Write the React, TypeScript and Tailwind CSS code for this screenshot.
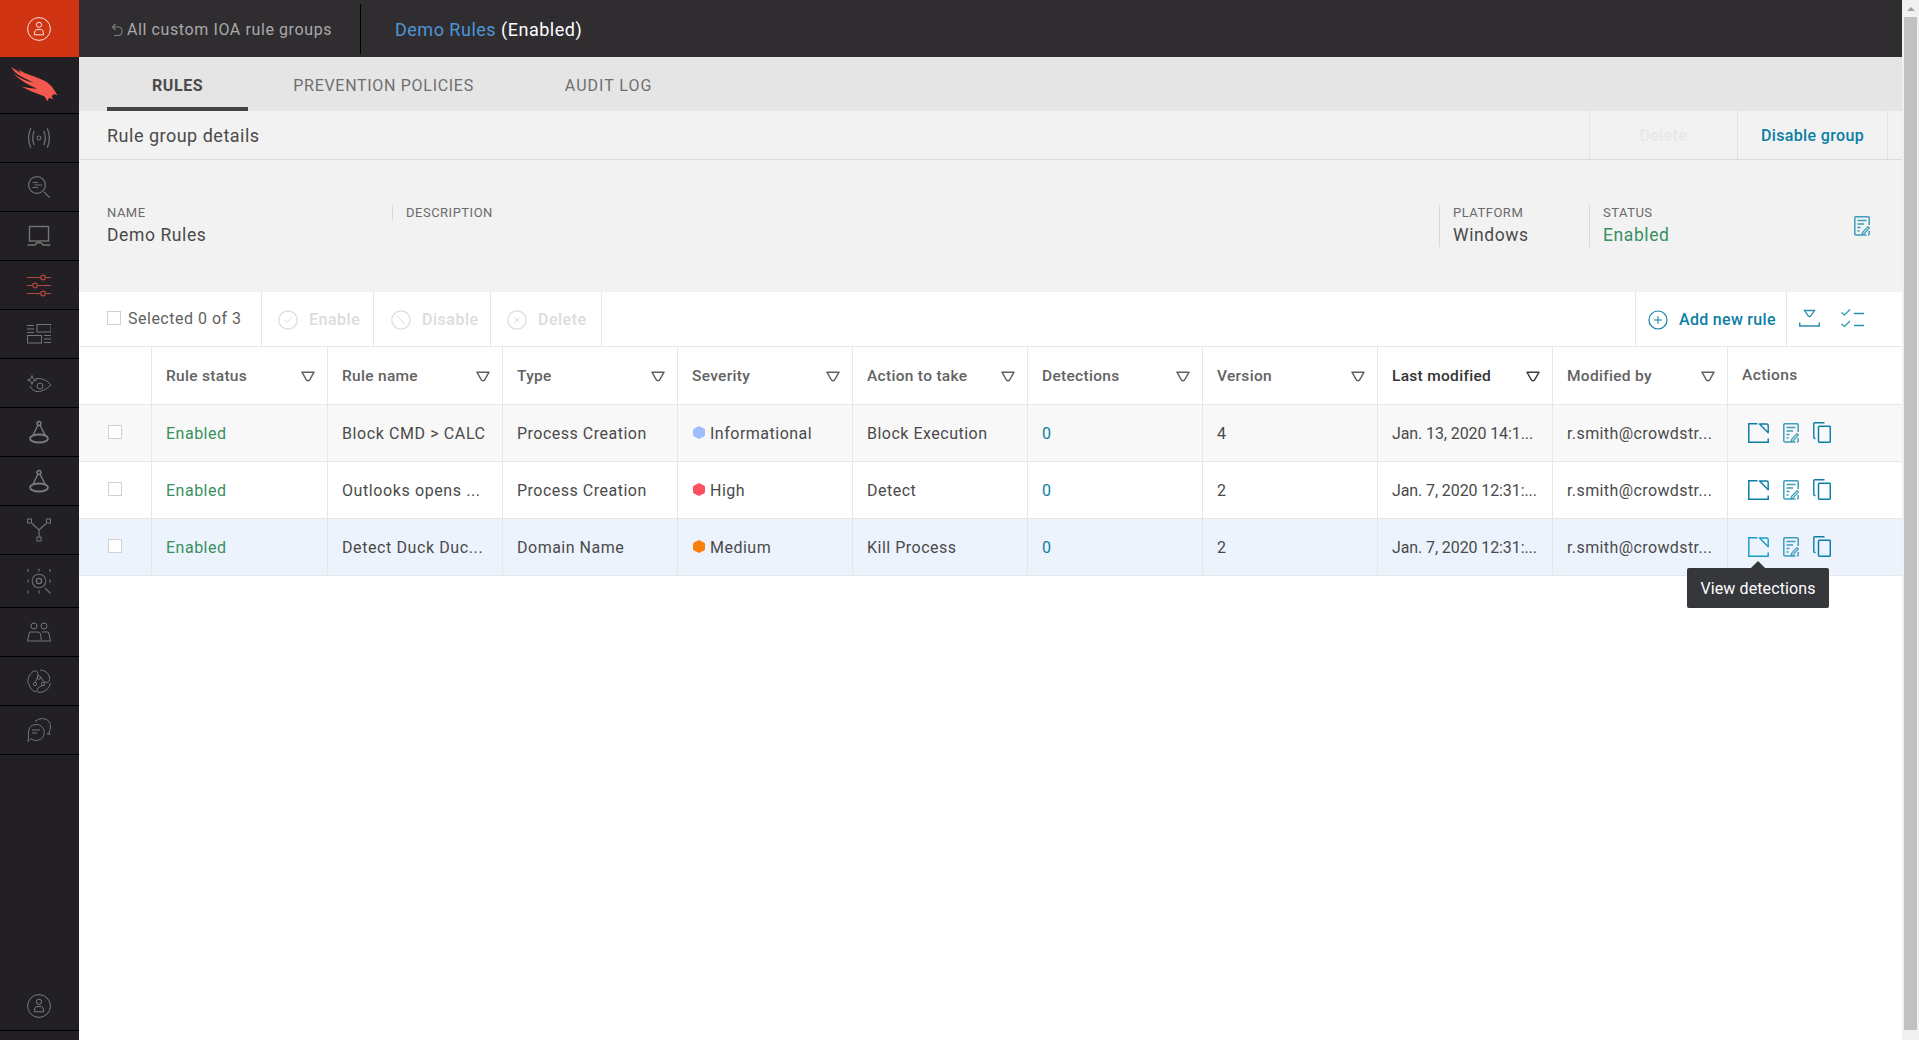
import React from 'react';

const FONT = 'font-["Roboto",sans-serif]';

const Ico = ({ className, vb = '0 0 24 24', children }: { className: string; vb?: string; children: React.ReactNode }) => (
  <svg viewBox={vb} fill="none" stroke="currentColor" strokeWidth={1} className={className}>
    {children}
  </svg>
);

const UserCircle = ({ className, sw = 1 }: { className: string; sw?: number }) => (
  <svg viewBox="0 0 24 24" fill="none" stroke="currentColor" strokeWidth={sw} className={className}>
    <circle cx="12" cy="12" r="11.4" />
    <circle cx="12" cy="7.8" r="2.6" />
    <path d="M7.2 17.8 L8.2 13.6 Q8.5 12.6 9.6 12.6 H14.4 Q15.5 12.6 15.8 13.6 L16.8 17.8 Z" />
  </svg>
);

const navIcons: { h: string; icon: React.ReactNode }[] = [
  {
    h: 'h-[49px]',
    icon: (
      <Ico className="w-[26px] h-[26px] text-[#6f6f6f]">
        <circle cx="12" cy="12" r="1.8" />
        <path d="M7.6 5.6 Q4.8 12 7.6 18.4 M16.4 5.6 Q19.2 12 16.4 18.4 M4.4 3 Q0.4 12 4.4 21 M19.6 3 Q23.6 12 19.6 21" strokeWidth={1.2} />
      </Ico>
    ),
  },
  {
    h: 'h-[49px]',
    icon: (
      <Ico className="w-[24px] h-[24px] text-[#6f6f6f]">
        <circle cx="10" cy="10" r="8.4" strokeWidth={1.2} />
        <path d="M5.5 7.5 H11 M7.5 10 H15 M5.5 12.5 H11 M17 17 L22.5 22.5" strokeWidth={1.2} />
      </Ico>
    ),
  },
  {
    h: 'h-[49px]',
    icon: (
      <Ico className="w-[24px] h-[24px] text-[#757575]">
        <rect x="2.5" y="2.5" width="19" height="14.5" strokeWidth={1.4} />
        <path d="M0.5 21 H8 Q9 18.5 12 18.5 Q15 18.5 16 21 H23.5" strokeWidth={1.4} />
      </Ico>
    ),
  },
  {
    h: 'h-[49px]',
    icon: (
      <Ico className="w-[24px] h-[24px] text-[#b5473c]">
        <path d="M0 4.5 H13 M19 4.5 H24 M0 12.5 H5 M11 12.5 H24 M0 20.5 H13 M19 20.5 H24" strokeWidth={1.2} />
        <circle cx="16" cy="4.5" r="2.3" strokeWidth={1.2} />
        <circle cx="8" cy="12.5" r="2.3" strokeWidth={1.2} />
        <circle cx="16" cy="20.5" r="2.3" strokeWidth={1.2} />
      </Ico>
    ),
  },
  {
    h: 'h-[49px]',
    icon: (
      <Ico className="w-[24px] h-[20px] text-[#757575]" vb="0 0 24 20">
        <path d="M0 1.5 H7 M0 5 H7 M0 8.5 H7 M17 11.5 H24 M17 15 H24 M17 18.5 H24" strokeWidth={1} />
        <rect x="10" y="0.5" width="14" height="7.5" />
        <rect x="0.5" y="11.5" width="14" height="7.5" />
      </Ico>
    ),
  },
  {
    h: 'h-[49px]',
    icon: (
      <Ico className="w-[24px] h-[17px] text-[#757575]" vb="0 0 24 17">
        <path d="M9 3.5 Q18 2.5 24 10 Q16 17.5 9 16.5 Q5 15.5 3 11" strokeWidth={1} />
        <circle cx="13" cy="11" r="3" strokeWidth={1} />
        <path d="M5 0.5 L6.2 3.8 L9.5 5 L6.2 6.2 L5 9.5 L3.8 6.2 L0.5 5 L3.8 3.8 Z" strokeWidth={1} />
      </Ico>
    ),
  },
  {
    h: 'h-[49px]',
    icon: (
      <Ico className="w-[24px] h-[24px] text-[#7b7b7b]">
        <path d="M12 1.5 A2 2 0 1 1 11.99 1.5" strokeWidth={1.6} />
        <path d="M10.8 5.5 L5.5 16 M13.2 5.5 L18.5 16" strokeWidth={1.4} />
        <ellipse cx="12" cy="18.5" rx="9" ry="4" strokeWidth={1.8} />
      </Ico>
    ),
  },
  {
    h: 'h-[49px]',
    icon: (
      <Ico className="w-[24px] h-[24px] text-[#7b7b7b]">
        <path d="M12 1.5 A2 2 0 1 1 11.99 1.5" strokeWidth={1.6} />
        <path d="M10.8 5.5 L5.5 16 M13.2 5.5 L18.5 16" strokeWidth={1.4} />
        <ellipse cx="12" cy="18.5" rx="9" ry="4" strokeWidth={1.8} />
      </Ico>
    ),
  },
  {
    h: 'h-[49px]',
    icon: (
      <Ico className="w-[24px] h-[24px] text-[#757575]">
        <rect x="0.5" y="1" width="4" height="4" />
        <rect x="19.5" y="1" width="4" height="4" />
        <rect x="10" y="19" width="4" height="4" />
        <path d="M5 5.5 L12 12 L19 5.5 M12 12 V18.5" strokeWidth={1.2} />
      </Ico>
    ),
  },
  {
    h: 'h-[53px]',
    icon: (
      <Ico className="w-[24px] h-[26px] text-[#6f6f6f]" vb="0 0 24 26">
        <circle cx="12" cy="13" r="6.8" strokeWidth={1.1} />
        <circle cx="12" cy="13" r="2.6" strokeWidth={1.4} />
        <path d="M12 0.5 V3.5 M12 22.5 V25.5 M1 1 V4 M23 1 V4 M1 11.5 V14.5 M23 11.5 V14.5 M1 22.5 V25.5 M18 20 L23.5 25.5" strokeWidth={1.2} />
      </Ico>
    ),
  },
  {
    h: 'h-[49px]',
    icon: (
      <Ico className="w-[24px] h-[20px] text-[#757575]" vb="0 0 24 20">
        <circle cx="7" cy="4" r="3" />
        <circle cx="17" cy="4" r="3" />
        <path d="M0.5 19 L2.5 10 H11 Q13 10 13.5 12 L14.5 19 Z M15 10 H21.5 L23.5 19 H15" />
      </Ico>
    ),
  },
  {
    h: 'h-[49px]',
    icon: (
      <Ico className="w-[24px] h-[24px] text-[#757575]">
        <circle cx="12" cy="8.5" r="1.7" />
        <circle cx="8" cy="15" r="1.7" />
        <circle cx="16" cy="15" r="1.7" />
        <path d="M13 1 Q20.5 1.5 22.5 8 Q23.5 13.5 19 13.5 Q16 13 14 8.5 M23.5 14 Q22 22 13 23.5 Q8 23 11 19 Q14 16.5 17.5 16 M1 15 Q0 7 6 2.5 Q10 0.5 11 4.5 Q11.5 9 8 13.5 M2 15 Q3 21 9 23" strokeWidth={1} />
      </Ico>
    ),
  },
  {
    h: 'h-[49px]',
    icon: (
      <Ico className="w-[24px] h-[24px] text-[#757575]">
        <path d="M8 3.5 Q11 0.5 15.5 0.5 Q23.5 1 23.5 9 Q23.5 12 22 14 L23 16.5 L20 15.5" strokeWidth={1} />
        <path d="M9 6.5 A8 8 0 1 1 4 20.5 L1 23.5 L1.5 18 Q0.5 6.5 9 6.5 Z" strokeWidth={1} />
        <path d="M5 12 H13 M5 15 H10" strokeWidth={1.2} />
      </Ico>
    ),
  },
];

const Sort = ({ dark }: { dark?: boolean }) => (
  <svg viewBox="0 0 14 11" fill="none" stroke="currentColor" strokeWidth={1.5} className={`w-[14px] h-[11px] ${dark ? 'text-[#3c3c3c]' : 'text-[#5f5f5f]'}`}>
    <path d="M1 1.2 H13 L8.6 9 Q7 10.4 5.4 9 Z" strokeLinejoin="round" />
  </svg>
);

const EditDoc = ({ className }: { className: string }) => (
  <Ico className={className} vb="0 0 16 20">
    <path d="M12.5 19 H2 Q0.8 19 0.8 17.8 V2 Q0.8 0.8 2 0.8 H14 Q15.2 0.8 15.2 2 V9 M15.2 15 V17.8 Q15.2 19 14 19" strokeWidth={1.5} />
    <path d="M3.5 4.5 H12.5 M3.5 8 H10 M3.5 11.5 H6.5 M3.5 15 H5.5" strokeWidth={1.4} />
    <path d="M8.5 16.5 L14 10.5 L15.5 12 L10 18 L8 18.5 Z" strokeWidth={1.2} />
  </Ico>
);

const ViewIcon = ({ className }: { className: string }) => (
  <Ico className={className} vb="0 0 21 20">
    <path d="M9.5 0.8 H0.8 V19.2 H20.2 V15.5" strokeWidth={1.5} />
    <path d="M11.5 1 H18.8 Q20.2 1 20.2 2.4 V9.8 Z" strokeWidth={1.4} strokeLinejoin="round" />
  </Ico>
);

const CopyIcon = ({ className }: { className: string }) => (
  <Ico className={className} vb="0 0 18 21">
    <path d="M11.5 0.8 H1.8 Q0.8 0.8 0.8 1.8 V15.5 Q0.8 16.5 1.8 16.5 H2.5" strokeWidth={1.4} />
    <rect x="5.5" y="4.2" width="11.8" height="16" rx="1" strokeWidth={1.5} />
  </Ico>
);

const columns = ['Rule status', 'Rule name', 'Type', 'Severity', 'Action to take', 'Detections', 'Version', 'Last modified', 'Modified by'];

const rows = [
  { name: 'Block CMD > CALC', type: 'Process Creation', sev: 'Informational', color: 'text-[#9dbfff]', action: 'Block Execution', version: '4', date: 'Jan. 13, 2020 14:1...', bg: 'bg-[#f8f8f8]' },
  { name: 'Outlooks opens ...', type: 'Process Creation', sev: 'High', color: 'text-[#fa5060]', action: 'Detect', version: '2', date: 'Jan. 7, 2020 12:31:...', bg: 'bg-white' },
  { name: 'Detect Duck Duc...', type: 'Domain Name', sev: 'Medium', color: 'text-[#fb7f0b]', action: 'Kill Process', version: '2', date: 'Jan. 7, 2020 12:31:...', bg: 'bg-[#edf3fd]' },
];

const Cell = ({ children }: { children: React.ReactNode }) => (
  <div className="flex items-center pl-[14px] pt-[1px] border-r border-[#e7e7e7] overflow-hidden whitespace-nowrap">{children}</div>
);

const Checkbox = () => <span className="block w-[14px] h-[14px] border border-[#d2d2d2] bg-white" />;

export default function App() {
  return (
    <div className={`${FONT} h-screen w-full flex bg-white text-[#4a4a4a] overflow-hidden`}>
      {/* sidebar */}
      <aside className="w-[79px] shrink-0 bg-[#222024] flex flex-col">
        <div className="h-[57px] bg-[#d13413] flex items-center justify-center pr-[1px] text-[#f8e4df]">
          <UserCircle className="w-[24px] h-[24px]" />
        </div>
        <div className="h-[57px] border-b border-black pl-[11px] pt-[10px]">
          <svg viewBox="33 202 141 106" className="block w-[47px] h-[35px] text-[#f4584e]" fill="currentColor">
            <path d="M33 202 C50 215 75 225 100 240 L95 246 C70 235 45 225 33 202 Z" />
            <path d="M55 208 C70 222 95 226 125 240 C150 250 160 265 173 288 L163 284 L155 290 L160 300 L148 295 L142 306 L135 292 C120 285 100 280 65 262 C85 266 100 268 112 268 C90 258 60 245 40 222 C58 236 80 245 100 250 C85 238 65 228 55 208 Z" />
          </svg>
        </div>
        {navIcons.map((item, i) => (
          <div key={i} className={`${item.h} border-b border-black flex items-center justify-center pr-[1px]`}>
            {item.icon}
          </div>
        ))}
        <div className="flex-1" />
        <div className="h-[50px] border-b border-black flex items-center justify-center pr-[1px] text-[#7b7b7b]">
          <UserCircle className="w-[24px] h-[24px]" />
        </div>
        <div className="h-[9px]" />
      </aside>

      <div className="w-[1823px] shrink-0 flex flex-col">
        {/* top bar */}
        <header className="h-[57px] bg-[#302d31] flex items-center shrink-0">
          <div className="w-[282px] h-[50px] flex items-center border-r border-black pl-[32px] pt-[2px] text-[#a9a9a9] text-[16px] tracking-[0.6px]">
            <svg viewBox="0 0 12 14" fill="none" stroke="currentColor" className="w-[12px] h-[14px] mr-[4px] text-[#7f7f7f]">
              <path d="M4.5 1 L1.5 4 L4.5 7 M1.5 4 H7 Q11 4 11 8 Q11 12.5 7 12.5 H3" strokeWidth={1.1} />
            </svg>
            All custom IOA rule groups
          </div>
          <div className="pl-[34px] pt-[2px] text-[18px] tracking-[0.5px]">
            <span className="text-[#4c95d6]">Demo Rules</span> <span className="text-white">(Enabled)</span>
          </div>
        </header>

        {/* tabs */}
        <nav className="h-[54px] bg-[#e5e5e5] flex pl-[28px] text-[16px] tracking-[0.7px] uppercase shrink-0">
          <div className="px-[45px] flex items-center border-b-4 border-[#444] font-bold text-[#4a4a4a] pt-[8px] tracking-[0.6px]">Rules</div>
          <div className="px-[45px] flex items-center text-[#6f6f6f] pt-[4px]">Prevention policies</div>
          <div className="pl-[46px] pr-[45px] flex items-center text-[#6f6f6f] pt-[4px] tracking-[1px]">Audit log</div>
        </nav>

        {/* details head */}
        <div className="h-[49px] bg-[#f2f2f2] border-b border-[#dcdcdc] flex items-stretch shrink-0">
          <div className="flex-1 pl-[28px] pt-[1px] flex items-center text-[18px] tracking-[0.5px]">Rule group details</div>
          <div className="w-[148px] border-l border-[#e2e2e2] pt-[1px] flex items-center justify-center text-[16px] font-medium tracking-[0.4px] text-[#e8e8e8]">Delete</div>
          <div className="w-[150px] border-l border-[#e2e2e2] pt-[1px] flex items-center justify-center text-[16px] font-medium tracking-[0.35px] text-[#0a7ea4]">Disable group</div>
          <div className="w-[15px] border-l border-[#e2e2e2]" />
        </div>

        {/* details */}
        <div className="h-[132px] bg-[#f2f2f2] flex pl-[28px] pt-[45px] shrink-0 relative">
          <div className="w-[285px]">
            <div className="text-[13px] tracking-[0.5px] text-[#6a6a6a] leading-[16px]">NAME</div>
            <div className="text-[17.5px] tracking-[0.6px] leading-[28px]">Demo Rules</div>
          </div>
          <div className="w-[1047px] h-[16px] border-l border-[#d8d8d8] pl-[13px] text-[13px] tracking-[0.5px] text-[#6a6a6a] leading-[16px]">DESCRIPTION</div>
          <div className="w-[150px] h-[42px] border-l border-[#d8d8d8] pl-[13px]">
            <div className="text-[13px] tracking-[0.5px] text-[#6a6a6a] leading-[16px]">PLATFORM</div>
            <div className="text-[17.5px] tracking-[0.6px] leading-[28px]">Windows</div>
          </div>
          <div className="h-[42px] border-l border-[#d8d8d8] pl-[13px]">
            <div className="text-[13px] tracking-[0.5px] text-[#6a6a6a] leading-[16px]">STATUS</div>
            <div className="text-[17.5px] tracking-[0.6px] leading-[28px] text-[#37905f]">Enabled</div>
          </div>
          <div className="ml-auto mr-[32px] mt-[11px]">
            <EditDoc className="w-[16px] h-[20px] text-[#3e9dbb]" />
          </div>
        </div>

        {/* toolbar */}
        <div className="h-[55px] border-b border-[#e7e7e7] flex items-stretch shrink-0 text-[16px] tracking-[0.5px]">
          <div className="w-[183px] border-r border-[#e7e7e7] pl-[28px] flex items-center gap-[7px] text-[#5f5f5f]">
            <span className="mb-[2px]"><Checkbox /></span>
            Selected 0 of 3
          </div>
          <div className="w-[112px] border-r border-[#e7e7e7] pl-[16px] pt-[1px] flex items-center gap-[11px] text-[#dcdcdc] font-medium">
            <Ico className="w-[20px] h-[20px]" vb="0 0 20 20">
              <circle cx="10" cy="10" r="9.2" strokeWidth={1.2} />
              <path d="M6.5 10 L9 12.5 L13.5 7.5" />
            </Ico>
            Enable
          </div>
          <div className="w-[117px] border-r border-[#e7e7e7] pl-[17px] pt-[1px] flex items-center gap-[11px] text-[#dcdcdc] font-medium">
            <Ico className="w-[20px] h-[20px]" vb="0 0 20 20">
              <circle cx="10" cy="10" r="9.2" strokeWidth={1.2} />
              <path d="M6 5.5 L14 14.5" />
            </Ico>
            Disable
          </div>
          <div className="w-[111px] border-r border-[#e7e7e7] pl-[16px] pt-[1px] flex items-center gap-[11px] text-[#dcdcdc] font-medium">
            <Ico className="w-[20px] h-[20px]" vb="0 0 20 20">
              <circle cx="10" cy="10" r="9.2" strokeWidth={1.2} />
              <path d="M7.5 7.5 L12.5 12.5 M12.5 7.5 L7.5 12.5" />
            </Ico>
            Delete
          </div>
          <div className="flex-1" />
          <div className="w-[152px] border-l border-r border-[#e7e7e7] pl-[12px] pt-[1px] flex items-center gap-[11px] text-[#0a7ea4] font-medium tracking-[0.3px]">
            <Ico className="w-[20px] h-[20px] shrink-0" vb="0 0 20 20">
              <circle cx="10" cy="10" r="9" strokeWidth={1.2} />
              <path d="M10 6 V14 M6 10 H14" />
            </Ico>
            Add new rule
          </div>
          <div className="w-[115px] flex items-center pl-[12px] gap-[21px] text-[#2b8fae]">
            <Ico className="w-[21px] h-[20px]" vb="0 0 21 20">
              <path d="M5.5 1.5 H15.5 L11.7 7 Q10.5 8.2 9.3 7 Z" strokeWidth={1.3} />
              <path d="M0.7 13.5 V17 H20.3 V13.5" strokeWidth={1.5} />
            </Ico>
            <Ico className="w-[24px] h-[20px]" vb="0 0 24 20">
              <path d="M0.5 3.5 L3.5 6 L9 0.5 M0.5 15 L3.5 17.5 L9 12" strokeWidth={1.1} />
              <path d="M13 4.5 H23 M13 16.5 H23" strokeWidth={1.6} />
            </Ico>
          </div>
        </div>

        {/* table */}
        <div className="grid grid-cols-[73px_176px_repeat(8,175px)_174px] grid-rows-[58px_repeat(3,57px)] text-[16px] tracking-[0.5px] shrink-0 relative">
          <div className="border-r border-b border-[#e7e7e7]" />
          {columns.map((c) => {
            const active = c === 'Last modified';
            return (
              <div key={c} className={`flex items-center justify-between pl-[14px] pr-[12px] pt-[2px] border-r border-b border-[#e7e7e7] font-medium text-[15.5px] tracking-[0.3px] ${active ? 'text-[#333]' : 'text-[#626262]'}`}>
                {c}
                <Sort dark={active} />
              </div>
            );
          })}
          <div className="flex items-center pl-[14px] pt-[1px] border-b border-[#e7e7e7] font-medium text-[15.5px] tracking-[0.4px] text-[#626262]">Actions</div>

          {rows.map((r) => (
            <div key={r.name} className={`${r.bg} col-span-11 grid grid-cols-[73px_176px_repeat(8,175px)_174px] border-b border-[#e7e7e7]`}>
              <div className="border-r border-[#e7e7e7] pl-[29px] pb-[2px] flex items-center">
                <Checkbox />
              </div>
              <Cell><span className="text-[#37905f]">Enabled</span></Cell>
              <Cell><span className="tracking-[0.6px]">{r.name}</span></Cell>
              <Cell>{r.type}</Cell>
              <Cell>
                <svg viewBox="0 0 12 13" className={`w-[12px] h-[13px] mr-[5px] ml-[1px] mb-[2px] ${r.color}`} fill="currentColor">
                  <path d="M6 0 L11 2.6 Q12 3.2 12 4 V9 Q12 9.8 11 10.4 L6 13 L1 10.4 Q0 9.8 0 9 V4 Q0 3.2 1 2.6 Z" />
                </svg>
                {r.sev}
              </Cell>
              <Cell>{r.action}</Cell>
              <Cell><span className="text-[#0a7ea4]">0</span></Cell>
              <Cell>{r.version}</Cell>
              <Cell><span className="tracking-[-0.1px]">{r.date}</span></Cell>
              <Cell><span className="tracking-[0.4px]">r.smith@crowdstr...</span></Cell>
              <div className="flex items-center pl-[20px] pb-[1px] gap-[14px]">
                <ViewIcon className={`w-[21px] h-[20px] ${r.bg === 'bg-[#edf3fd]' ? 'text-[#179fc8]' : 'text-[#0a7ea4]'}`} />
                <EditDoc className="w-[16px] h-[20px] text-[#3e9dbb]" />
                <CopyIcon className="w-[18px] h-[21px] text-[#0a7ea4]" />
              </div>
            </div>
          ))}

          {/* tooltip over the last row */}
          <div className="absolute left-[1608px] top-[221px] w-[142px] h-[40px] bg-[#36373b] rounded-[2px] flex items-center justify-center pt-[2px] text-[16px] tracking-[0.1px] text-white">
            <span className="absolute -top-[5px] left-[66px] w-[10px] h-[10px] bg-[#36373b] rotate-45" />
            View detections
          </div>
        </div>
      </div>

      {/* page scrollbar */}
      <div className="w-[17px] shrink-0 bg-[#f0f0f0] flex flex-col items-center">
        <div className="h-[17px] flex items-center justify-center">
          <span className="w-0 h-0 border-l-[4px] border-r-[4px] border-b-[4px] border-l-transparent border-r-transparent border-b-[#a3a3a3]" />
        </div>
        <div className="w-[13px] flex-1 bg-[#c1c1c1]" />
        <div className="h-[10px]" />
      </div>
    </div>
  );
}
